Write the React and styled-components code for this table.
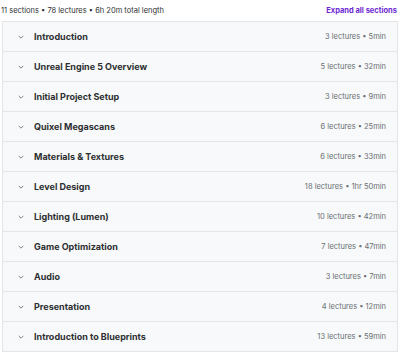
import React from "react";
import styled, { createGlobalStyle } from "styled-components";

const Global = createGlobalStyle`
  html, body { margin: 0; padding: 0; background: #fff; }
  body { font-family: Inter, "Noto Sans", sans-serif; color: #2d2f31; }
`;

const Page = styled.div`
  width: 400px;
  padding: 0 2px 0 2px;
  box-sizing: border-box;
`;

const Header = styled.div`
  display: flex;
  justify-content: space-between;
  align-items: center;
  height: 21px;
  padding: 0 1px 0 0;
  margin-left: -1px;
`;

const Summary = styled.span`
  font-size: 7.5px;
  color: #2d2f31;
`;

const ExpandAll = styled.span`
  font-size: 7.5px;
  font-weight: 700;
  color: #6d28d2;
`;

const List = styled.div`
  border: 1px solid #e3e6e9;
  border-bottom: none;
`;

const Row = styled.div`
  display: flex;
  align-items: center;
  height: 29px;
  border-bottom: 1px solid #e3e6e9;
  background: #f7f9fa;
  padding: 0 11px 0 14px;
`;

const Chevron = styled.svg`
  width: 8px;
  height: 8px;
  margin-right: 9px;
  flex: none;
`;

const Title = styled.span`
  flex: 1;
  font-size: 9px;
  font-weight: 700;
  color: #2d2f31;
`;

const Meta = styled.span`
  font-size: 7.5px;
  color: #6a6f73;
`;

const sections = [
  ["Introduction", "3 lectures • 5min"],
  ["Unreal Engine 5 Overview", "5 lectures • 32min"],
  ["Initial Project Setup", "3 lectures • 9min"],
  ["Quixel Megascans", "6 lectures • 25min"],
  ["Materials & Textures", "6 lectures • 33min"],
  ["Level Design", "18 lectures • 1hr 50min"],
  ["Lighting (Lumen)", "10 lectures • 42min"],
  ["Game Optimization", "7 lectures • 47min"],
  ["Audio", "3 lectures • 7min"],
  ["Presentation", "4 lectures • 12min"],
  ["Introduction to Blueprints", "13 lectures • 59min"],
];

export default function App() {
  return (
    <Page>
      <Global />
      <Header>
        <Summary>11 sections • 78 lectures • 6h 20m total length</Summary>
        <ExpandAll>Expand all sections</ExpandAll>
      </Header>
      <List>
        {sections.map(([t, m]) => (
          <Row key={t}>
            <Chevron viewBox="0 0 10 10">
              <path d="M2.5 4 L5 6.5 L7.5 4" fill="none" stroke="#6a6f73" strokeWidth="1.1" strokeLinecap="round" strokeLinejoin="round" />
            </Chevron>
            <Title>{t}</Title>
            <Meta>{m}</Meta>
          </Row>
        ))}
      </List>
    </Page>
  );
}
